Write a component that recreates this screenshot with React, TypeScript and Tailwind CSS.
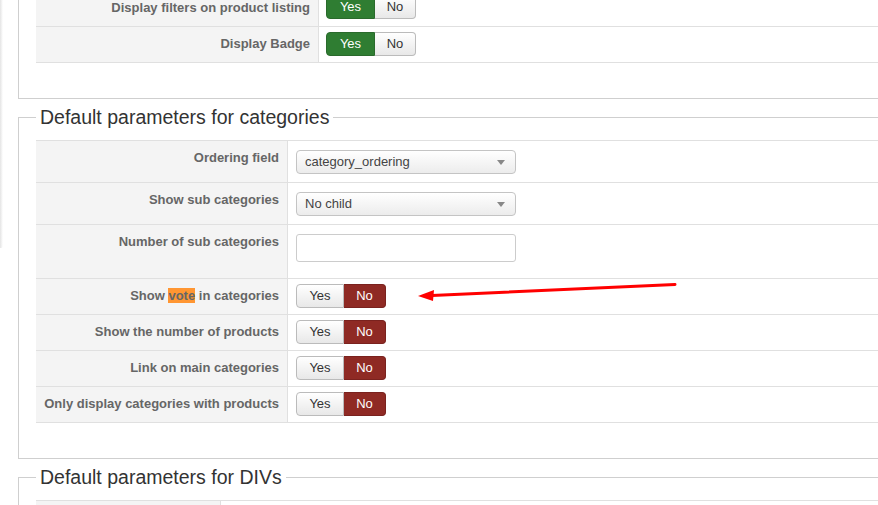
import React from 'react'

const font = "font-['Liberation_Sans',Arial,Helvetica,sans-serif]"

function Toggle({ value }: { value: 'yes' | 'no' }) {
  const yesOn = value === 'yes'
  return (
    <div className="flex h-[24px] text-[13px] leading-[22px]">
      <span
        className={
          yesOn
            ? 'w-[49px] text-center rounded-l-[4px] border border-[#2a6a2c] bg-[#2f7d32] text-white'
            : 'w-[48px] text-center rounded-l-[4px] border border-[#bbb] bg-gradient-to-b from-white to-[#e8e8e8] text-[#333]'
        }
      >
        Yes
      </span>
      <span
        className={
          yesOn
            ? 'w-[41px] text-center rounded-r-[4px] border border-l-0 border-[#bbb] bg-gradient-to-b from-white to-[#e8e8e8] text-[#333]'
            : 'w-[42px] text-center rounded-r-[4px] border border-l-0 border-[#7a221e] bg-[#8f2a24] text-white'
        }
      >
        No
      </span>
    </div>
  )
}

function Select({ text }: { text: string }) {
  return (
    <div className="relative flex items-center w-[220px] h-[24px] rounded-[4px] border border-[#c4c4c4] bg-gradient-to-b from-white to-[#ececec] pl-[8px] text-[13px] text-[#444]">
      {text}
      <span className="absolute right-[10px] top-[9px] w-0 h-0 border-l-[4px] border-r-[4px] border-t-[5px] border-l-transparent border-r-transparent border-t-[#888]" />
    </div>
  )
}

type Row = { label: React.ReactNode; control: React.ReactNode; h: number; pt: number }

function Table({ rows, labelW }: { rows: Row[]; labelW: string }) {
  return (
    <div className="border-b border-[#e0e0e0]">
      {rows.map((r, i) => (
        <div key={i} className="flex border-t border-[#e0e0e0]" style={{ height: r.h }}>
          <div className={`${labelW} shrink-0 bg-[#f4f4f4] border-r border-[#e0e0e0] text-right pr-[8px] pt-[8px] text-[13px] leading-[18px] font-bold text-[#666]`}>
            {r.label}
          </div>
          <div className="pl-[8px]" style={{ paddingTop: r.pt }}>
            {r.control}
          </div>
        </div>
      ))}
    </div>
  )
}

function Legend({ children }: { children: React.ReactNode }) {
  return (
    <legend className="px-[4px] text-[19.5px] leading-[24px] text-[#333]">{children}</legend>
  )
}

export default function App() {
  const catRows: Row[] = [
    { label: 'Ordering field', control: <Select text="category_ordering" />, h: 42, pt: 9 },
    { label: 'Show sub categories', control: <Select text="No child" />, h: 42, pt: 9 },
    {
      label: 'Number of sub categories',
      control: <div className="w-[220px] h-[28px] rounded-[3px] border border-[#ccc] bg-white" />,
      h: 54,
      pt: 9,
    },
    {
      label: (
        <>
          Show <span className="bg-[#ff9632]">vote</span> in categories
        </>
      ),
      control: <Toggle value="no" />,
      h: 36,
      pt: 5,
    },
    { label: 'Show the number of products', control: <Toggle value="no" />, h: 36, pt: 5 },
    { label: 'Link on main categories', control: <Toggle value="no" />, h: 36, pt: 5 },
    { label: 'Only display categories with products', control: <Toggle value="no" />, h: 36, pt: 5 },
  ]

  return (
    <div className={`relative h-[505px] w-[878px] overflow-hidden bg-white ${font}`}>
      <div className="absolute left-0 top-0 w-[3px] h-[248px] bg-gradient-to-r from-[#e4e4e4] to-white rounded-br-[2px]" />

      <div className="pl-[18px] w-[900px]">
        <div className="-mt-[11px] border border-t-0 border-[#cfcfcf] pl-[17px] pb-[35px]">
          <div className="border-b border-[#e0e0e0]">
            <div className="flex h-[37px]">
              <div className="w-[283px] shrink-0 bg-[#f4f4f4] border-r border-[#e0e0e0] text-right pr-[8px] pt-[10px] text-[13px] leading-[18px] font-bold text-[#666]">
                Display filters on product listing
              </div>
              <div className="pl-[7px] pt-[6px]">
                <Toggle value="yes" />
              </div>
            </div>
            <div className="flex h-[36px] border-t border-[#e0e0e0]">
              <div className="w-[283px] shrink-0 bg-[#f4f4f4] border-r border-[#e0e0e0] text-right pr-[8px] pt-[8px] text-[13px] leading-[18px] font-bold text-[#666]">
                Display Badge
              </div>
              <div className="pl-[7px] pt-[5px]">
                <Toggle value="yes" />
              </div>
            </div>
          </div>
        </div>

        <fieldset className="mt-[6px] border border-[#cfcfcf] pl-[17px] pb-[35px]">
          <Legend>Default parameters for categories</Legend>
          <div className="mt-[11px]">
            <Table rows={catRows} labelW="w-[252px]" />
          </div>
        </fieldset>

        <fieldset className="mt-[6px] border border-[#cfcfcf] pl-[17px] pb-[35px]">
          <Legend>Default parameters for DIVs</Legend>
          <div className="mt-[11px] flex border-t border-[#e0e0e0] h-[40px]">
            <div className="w-[185px] shrink-0 bg-[#f4f4f4] border-r border-[#e0e0e0]" />
          </div>
        </fieldset>
      </div>

      <svg className="absolute left-0 top-0 pointer-events-none" width="878" height="505">
        <line x1="675" y1="284.5" x2="432" y2="295.5" stroke="#ff0000" strokeWidth="3" strokeLinecap="round" />
        <polygon points="418,296 434,290 433,301" fill="#ff0000" />
      </svg>
    </div>
  )
}
